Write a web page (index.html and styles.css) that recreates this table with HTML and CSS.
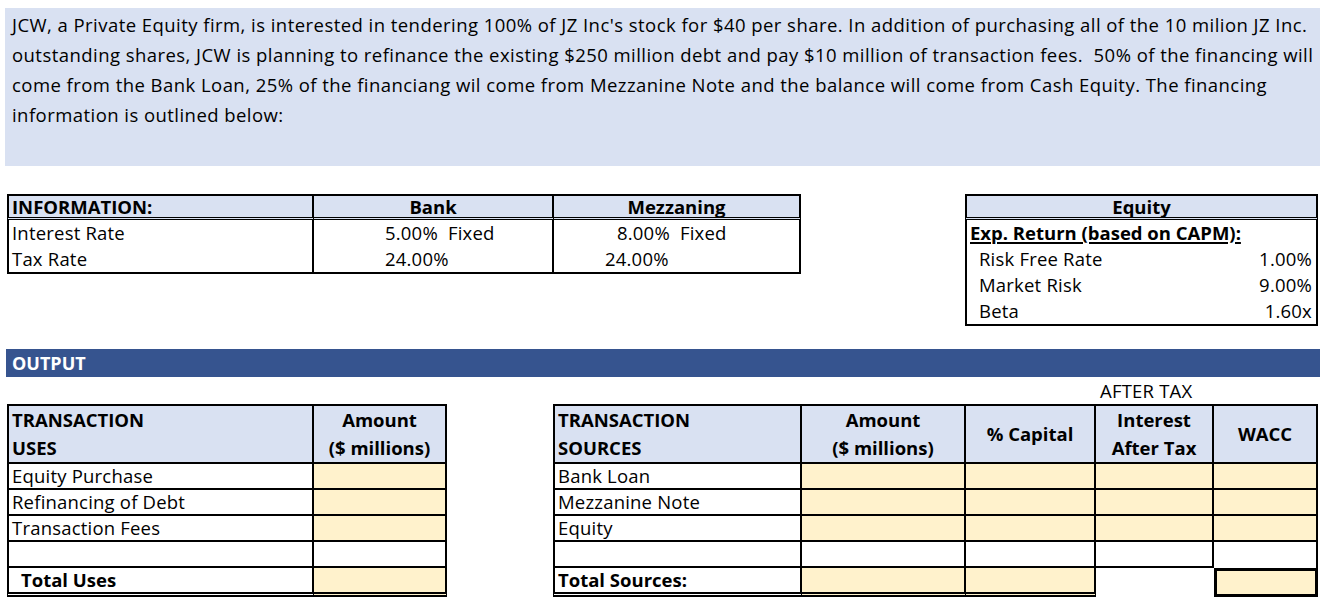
FILE: index.html
```html
<!DOCTYPE html>
<html lang="en">
<head>
<meta charset="utf-8">
<title>JCW LBO Financing</title>
<link rel="stylesheet" href="styles.css">
</head>
<body>
<div class="sheet">
  <div class="intro">
    <span class="line">JCW, a Private Equity firm, is interested in tendering 100% of JZ Inc's stock for $40 per share. In addition of purchasing all of the 10 milion JZ Inc.</span>
    <span class="line">outstanding shares, JCW is planning to refinance the existing $250 million debt and pay $10 million of transaction fees.&nbsp; 50% of the financing will</span>
    <span class="line">come from the Bank Loan, 25% of the financiang wil come from Mezzanine Note and the balance will come from Cash Equity. The financing</span>
    <span class="line">information is outlined below:</span>
  </div>

  <div class="inputs">
    <table class="grid info">
      <tr class="hdr">
        <th class="c-label left">INFORMATION:</th>
        <th class="c-bank">Bank</th>
        <th class="c-mezz last">Mezzaning</th>
      </tr>
      <tr class="row">
        <td class="left">Interest Rate</td>
        <td class="pre pad-bank">5.00%  Fixed</td>
        <td class="pre pad-mezz1 last">8.00%  Fixed</td>
      </tr>
      <tr class="row bottom">
        <td class="left">Tax Rate</td>
        <td class="pad-bank">24.00%</td>
        <td class="pad-mezz2 last">24.00%</td>
      </tr>
    </table>

    <table class="grid equity">
      <tr class="hdr">
        <th class="left last" colspan="2">Equity</th>
      </tr>
      <tr class="row">
        <td class="left last capm" colspan="2">Exp. Return (based on CAPM):</td>
      </tr>
      <tr class="row">
        <td class="left e-label">Risk Free Rate</td>
        <td class="last e-val">1.00%</td>
      </tr>
      <tr class="row">
        <td class="left e-label">Market Risk</td>
        <td class="last e-val">9.00%</td>
      </tr>
      <tr class="row bottom">
        <td class="left e-label">Beta</td>
        <td class="last e-val">1.60x</td>
      </tr>
    </table>
  </div>

  <div class="output-bar">OUTPUT</div>

  <div class="after-tax-row">
    <span class="after-tax">AFTER TAX</span>
  </div>

  <div class="outputs">
    <table class="grid out uses">
      <tr class="ohdr">
        <th class="left u-label lalign">TRANSACTION<br>USES</th>
        <th class="u-amt">Amount<br>($ millions)</th>
      </tr>
      <tr class="orow">
        <td class="left">Equity Purchase</td>
        <td class="fill"></td>
      </tr>
      <tr class="orow">
        <td class="left">Refinancing of Debt</td>
        <td class="fill"></td>
      </tr>
      <tr class="orow">
        <td class="left">Transaction Fees</td>
        <td class="fill"></td>
      </tr>
      <tr class="orow">
        <td class="left"></td>
        <td></td>
      </tr>
      <tr class="ototal">
        <td class="left total-uses">Total Uses</td>
        <td class="fill"></td>
      </tr>
    </table>

    <table class="grid out sources">
      <tr class="ohdr">
        <th class="left s-label lalign">TRANSACTION<br>SOURCES</th>
        <th class="s-amt">Amount<br>($ millions)</th>
        <th class="s-cap">% Capital</th>
        <th class="s-int">Interest<br>After Tax</th>
        <th class="s-wacc">WACC</th>
      </tr>
      <tr class="orow">
        <td class="left">Bank Loan</td>
        <td class="fill"></td>
        <td class="fill"></td>
        <td class="fill"></td>
        <td class="fill"></td>
      </tr>
      <tr class="orow">
        <td class="left">Mezzanine Note</td>
        <td class="fill"></td>
        <td class="fill"></td>
        <td class="fill"></td>
        <td class="fill"></td>
      </tr>
      <tr class="orow">
        <td class="left">Equity</td>
        <td class="fill"></td>
        <td class="fill"></td>
        <td class="fill"></td>
        <td class="fill"></td>
      </tr>
      <tr class="orow">
        <td class="left"></td>
        <td></td>
        <td></td>
        <td></td>
        <td class="no-bottom"></td>
      </tr>
      <tr class="ototal">
        <td class="left total-src">Total Sources:</td>
        <td class="fill"></td>
        <td class="fill"></td>
        <td class="blank"></td>
        <td class="fill wacc-total"></td>
      </tr>
    </table>
  </div>
</div>
</body>
</html>
```

FILE: styles.css
```css
html, body {
  margin: 0;
  padding: 0;
  background: #ffffff;
}

body {
  font-family: "Open Sans", Lato, "Liberation Sans", sans-serif;
  font-size: 18.5px;
  color: #000000;
}

.sheet {
  padding-top: 8px;
  width: 1320px;
}

/* ---------- intro text box ---------- */
.intro {
  margin-left: 5px;
  width: 1315px;
  height: 158px;
  box-sizing: border-box;
  background: #d9e1f2;
  padding: 2px 0 0 7px;
  line-height: 30px;
  letter-spacing: 0.45px;
  white-space: nowrap;
}

.intro .line {
  display: block;
}

/* ---------- generic grid tables ---------- */
.grid {
  border-collapse: separate;
  border-spacing: 0;
  table-layout: fixed;
}

.grid th,
.grid td {
  box-sizing: border-box;
  padding: 0;
  border-top: 0;
  border-left: 0;
  border-right: 2px solid #000;
  border-bottom: 0;
  white-space: nowrap;
  vertical-align: middle;
  line-height: 20px;
}

.grid td {
  letter-spacing: 0.2px;
}

.grid th {
  font-weight: 700;
  letter-spacing: 0;
}

.grid .left {
  border-left: 2px solid #000;
}

.grid tr:first-child > * {
  border-top: 2px solid #000;
}

.pre {
  white-space: pre !important;
}

/* ---------- input tables ---------- */
.inputs {
  display: flex;
  align-items: flex-start;
  gap: 164px;
  margin-top: 28px;
  padding-left: 7px;
}

.info .hdr > *,
.equity .hdr > * {
  height: 26px;
  background: #d9e1f2;
  border-bottom: 3px double #000;
}

.info .row > *,
.equity .row > * {
  height: 26px;
}

.info .bottom > *,
.equity .bottom > * {
  height: 28px;
  border-bottom: 2px solid #000;
}

.info {
  width: 794px;
}

.info .c-label {
  width: 307px;
  text-align: left;
  padding-left: 3px;
}

.info .c-bank {
  width: 240px;
  text-align: center;
}

.info .c-mezz {
  width: 247px;
  text-align: center;
}

.info td.left {
  padding-left: 3px;
}

.pad-bank {
  padding-left: 71px !important;
}

.pad-mezz1 {
  padding-left: 63px !important;
}

.pad-mezz2 {
  padding-left: 51px !important;
}

.equity {
  width: 353px;
}

.equity th {
  text-align: center;
}

.equity .capm {
  font-weight: 700;
  letter-spacing: 0;
  text-decoration: underline;
  text-decoration-thickness: 2px;
  text-underline-offset: 2px;
  padding-left: 3px;
}

.equity .e-label {
  width: 200px;
  padding-left: 12px;
  border-right: 0;
}

.equity .e-val {
  text-align: right;
  padding-right: 4px;
}

/* ---------- output bar ---------- */
.output-bar {
  margin-top: 23px;
  margin-left: 6px;
  width: 1314px;
  height: 28px;
  box-sizing: border-box;
  background: #36548f;
  color: #ffffff;
  font-size: 18px;
  font-weight: 700;
  line-height: 28px;
  padding-left: 6px;
}

.after-tax-row {
  display: grid;
  grid-template-columns: 1100px 120px;
  height: 27px;
  line-height: 27px;
  letter-spacing: 0.2px;
}

.after-tax {
  grid-column: 2;
}

/* ---------- output tables ---------- */
.outputs {
  display: flex;
  align-items: flex-start;
  gap: 106px;
  padding-left: 7px;
}

.out .ohdr > * {
  height: 60px;
  background: #d9e1f2;
  border-bottom: 2px solid #000;
  line-height: 28px;
  text-align: center;
}

.out .ohdr > .lalign {
  text-align: left;
  padding-left: 3px;
}

.out .orow > * {
  height: 26px;
  border-bottom: 2px solid #000;
}

.out .ototal > * {
  height: 29px;
  border-bottom: 5px double #000;
}

.out td.left {
  padding-left: 3px;
}

.fill {
  background: #fff2cc;
}

.uses {
  width: 440px;
}

.uses .u-label {
  width: 307px;
}

.uses .u-amt {
  width: 133px;
}

.total-uses {
  font-weight: 700;
  letter-spacing: 0 !important;
  padding-left: 12px !important;
}

.sources {
  width: 765px;
}

.sources .s-label {
  width: 249px;
}

.sources .s-amt {
  width: 164px;
}

.sources .s-cap {
  width: 130px;
}

.sources .s-int {
  width: 118px;
}

.sources .s-wacc {
  width: 104px;
}

.total-src {
  font-weight: 700;
  letter-spacing: 0 !important;
}

.sources .no-bottom {
  border-bottom: 0 !important;
}

.sources .blank {
  border-right: 0 !important;
  border-bottom: 0 !important;
  background: #ffffff;
}

.sources .wacc-total {
  border: 3px solid #000 !important;
}
```
